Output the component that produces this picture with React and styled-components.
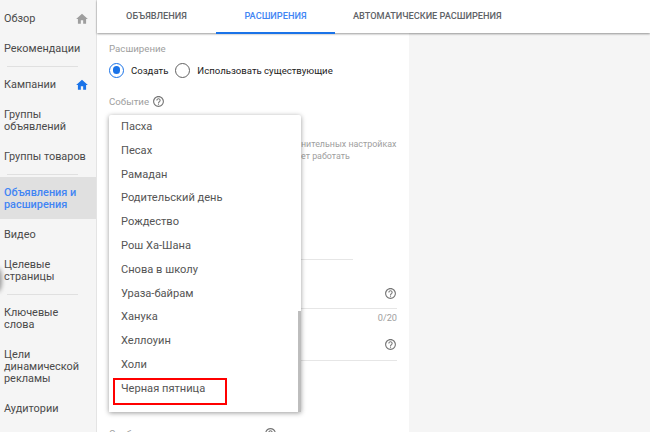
import styled, { createGlobalStyle } from 'styled-components';
import { MdHome, MdHelpOutline } from 'react-icons/md';

const Global = createGlobalStyle`
  html, body {
    margin: 0;
    padding: 0;
    background: #fff;
    font-family: Roboto, 'Noto Sans', sans-serif;
  }
`;

const Page = styled.div`
  position: relative;
  display: flex;
  width: 650px;
  height: 432px;
  overflow: hidden;
`;

const Sidebar = styled.nav`
  position: relative;
  flex: 0 0 96px;
  padding-top: 3px;
  background: #f5f5f5;
  border-right: 1px solid #e4e4e4;
`;

const NavItem = styled.div`
  display: flex;
  align-items: flex-start;
  justify-content: space-between;
  padding: 10px 7px 8px 4px;
  font-size: 10.9px;
  line-height: 12px;
  color: ${(p) => (p.$active ? '#4285f4' : '#4a4a4a')};
  background: ${(p) => (p.$active ? '#e0e0e0' : 'transparent')};
  font-weight: ${(p) => (p.$active ? 500 : 400)};
  white-space: pre-line;
  svg {
    font-size: 14px;
    margin: -1px 0;
    color: ${(p) => (p.$iconBlue ? '#1a73e8' : '#9e9e9e')};
  }
`;

const NavDivider = styled.div`
  height: 1px;
  margin: 3px 18px 2px 7px;
  background: #e0e0e0;
`;

const EdgeShadow = styled.div`
  position: absolute;
  left: -6px;
  top: 268px;
  width: 8px;
  height: 24px;
  border-radius: 50%;
  background: #9a9a9a;
  filter: blur(2px);
`;

const Main = styled.div`
  flex: 1;
  display: flex;
  flex-direction: column;
  min-width: 0;
`;

const Tabs = styled.div`
  flex: 0 0 31px;
  display: flex;
  height: 31px;
  padding-top: 2px;
  box-shadow: 0 1px 2px rgba(0, 0, 0, 0.4);
  position: relative;
  z-index: 1;
  background: #fff;
`;

const Tab = styled.div`
  min-width: 119px;
  box-sizing: border-box;
  padding: 7px 18px 0;
  margin-bottom: -1px;
  font-size: 9.2px;
  line-height: 13px;
  font-weight: 500;
  text-align: center;
  color: ${(p) => (p.$active ? '#4285f4' : '#5f6368')};
  border-bottom: 2px solid ${(p) => (p.$active ? '#1a73e8' : 'transparent')};
`;

const Body = styled.div`
  flex: 1;
  display: flex;
  min-height: 0;
`;

const Form = styled.div`
  flex: 0 0 312px;
  min-width: 0;
  box-sizing: border-box;
  padding: 9px 12px 0;
  background: #fff;
`;

const RightPane = styled.div`
  flex: 1;
  background: #f5f5f5;
`;

const Label = styled.div`
  display: flex;
  align-items: center;
  gap: 3px;
  font-size: 9.7px;
  line-height: 13px;
  color: #9e9e9e;
  margin-top: ${(p) => p.$top || 0}px;
  svg {
    font-size: 13px;
    color: #757575;
  }
`;

const RadioRow = styled.div`
  display: flex;
  align-items: center;
  margin-top: 7px;
  height: 16px;
`;

const Radio = styled.span`
  box-sizing: border-box;
  flex: 0 0 15px;
  width: 15px;
  height: 15px;
  border-radius: 50%;
  border: 1.5px solid ${(p) => (p.$on ? '#1a73e8' : '#616161')};
  display: flex;
  align-items: center;
  justify-content: center;
  &::after {
    content: '';
    width: 7.5px;
    height: 7.5px;
    border-radius: 50%;
    background: ${(p) => (p.$on ? '#1a73e8' : 'transparent')};
  }
`;

const RadioText = styled.span`
  font-size: 9.6px;
  color: #212121;
  margin: 0 7px 0 7px;
`;

const Hint = styled.div`
  margin: 30px 0 0 192px;
  font-size: 8.9px;
  line-height: 12px;
  color: #9e9e9e;
  white-space: nowrap;
`;

const Line = styled.div`
  height: 1px;
  background: #e6e6e6;
  width: ${(p) => p.$w}px;
  margin-top: ${(p) => p.$top}px;
`;

const HelpRow = styled.div`
  display: flex;
  justify-content: flex-end;
  width: 288px;
  margin-top: ${(p) => p.$top}px;
  height: 13px;
  svg {
    font-size: 13px;
    color: #757575;
  }
`;

const Counter = styled.div`
  width: 288px;
  margin-top: 3px;
  text-align: right;
  font-size: 9.2px;
  line-height: 12px;
  color: #9e9e9e;
`;

const Menu = styled.div`
  position: absolute;
  left: 109px;
  top: 115px;
  width: 192px;
  height: 297px;
  background: #fff;
  border-radius: 2px 2px 0 0;
  box-shadow: 0 1px 5px rgba(0, 0, 0, 0.4);
  overflow: hidden;
  z-index: 2;
`;

const MenuItem = styled.div`
  position: relative;
  height: 23.8px;
  line-height: 23.8px;
  padding-left: 12px;
  font-size: 11.1px;
  color: #555;
`;

const Highlight = styled.span`
  position: absolute;
  left: 4px;
  top: 1px;
  width: 110px;
  height: 23px;
  border: 2px solid #f00;
`;

const ScrollThumb = styled.div`
  position: absolute;
  right: 0;
  bottom: 0;
  width: 3px;
  height: 101px;
  background: #bdbdbd;
`;

const events = [
  'Пасха',
  'Песах',
  'Рамадан',
  'Родительский день',
  'Рождество',
  'Рош Ха-Шана',
  'Снова в школу',
  'Ураза-байрам',
  'Ханука',
  'Хеллоуин',
  'Холи',
  'Черная пятница',
];

const App = () => {
  return (
    <Page>
      <Global />
      <Sidebar>
        <NavItem>
          Обзор
          <MdHome />
        </NavItem>
        <NavItem>Рекомендации</NavItem>
        <NavDivider />
        <NavItem $iconBlue>
          Кампании
          <MdHome />
        </NavItem>
        <NavItem>{'Группы\nобъявлений'}</NavItem>
        <NavItem>Группы товаров</NavItem>
        <NavDivider />
        <NavItem $active>{'Объявления и\nрасширения'}</NavItem>
        <NavItem>Видео</NavItem>
        <NavItem>{'Целевые\nстраницы'}</NavItem>
        <NavDivider />
        <NavItem>{'Ключевые\nслова'}</NavItem>
        <NavItem>{'Цели\nдинамической\nрекламы'}</NavItem>
        <NavItem>Аудитории</NavItem>
        <EdgeShadow />
      </Sidebar>
      <Main>
        <Tabs>
          <Tab>ОБЪЯВЛЕНИЯ</Tab>
          <Tab $active>РАСШИРЕНИЯ</Tab>
          <Tab>АВТОМАТИЧЕСКИЕ РАСШИРЕНИЯ</Tab>
        </Tabs>
        <Body>
          <Form>
            <Label>Расширение</Label>
            <RadioRow>
              <Radio $on />
              <RadioText>Создать</RadioText>
              <Radio />
              <RadioText>Использовать существующие</RadioText>
            </RadioRow>
            <Label $top={17}>
              Событие
              <MdHelpOutline />
            </Label>
            <Hint>
              нительных настройках
              <br />
              ет работать
            </Hint>
            <Line $w={244} $top={97} />
            <HelpRow $top={27}>
              <MdHelpOutline />
            </HelpRow>
            <Line $w={288} $top={8} />
            <Counter>0/20</Counter>
            <HelpRow $top={14}>
              <MdHelpOutline />
            </HelpRow>
            <Line $w={288} $top={9} />
            <Label $top={66}>
              Особые условия в предложениях
              <MdHelpOutline />
            </Label>
          </Form>
          <RightPane />
        </Body>
      </Main>
      <Menu>
        {events.map((name, i) => (
          <MenuItem key={name}>
            {name}
            {i === events.length - 1 && <Highlight />}
          </MenuItem>
        ))}
        <ScrollThumb />
      </Menu>
    </Page>
  );
};

export default App;
